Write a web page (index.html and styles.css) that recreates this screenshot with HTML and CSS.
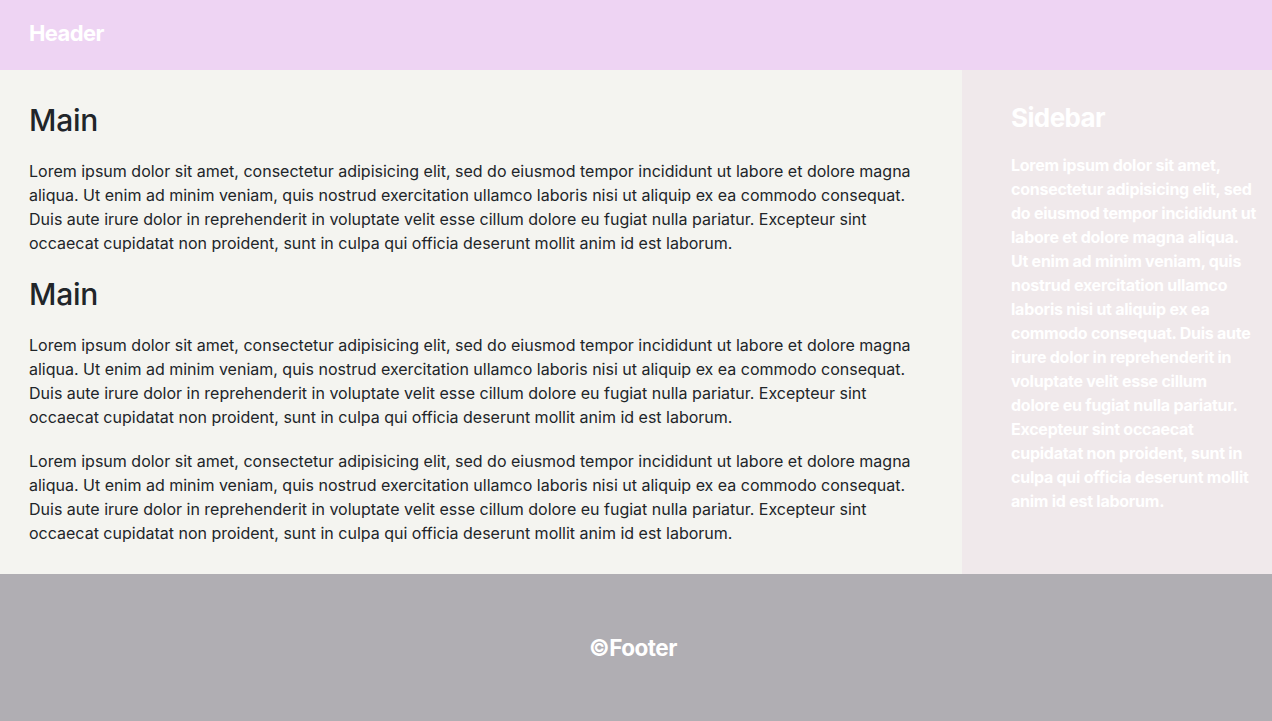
FILE: index.html
```html
<!DOCTYPE html>
<html lang="en">
<head>
<meta charset="utf-8">
<title>Layout</title>
<link rel="stylesheet" href="styles.css">
</head>
<body>
<div class="page">
  <header class="header"><span class="header-title">Header</span></header>
  <main class="main">
    <h1 class="main-title">Main</h1>
    <p class="text">Lorem ipsum dolor sit amet, consectetur adipisicing elit, sed do eiusmod tempor incididunt ut labore et dolore magna aliqua. Ut enim ad minim veniam, quis nostrud exercitation ullamco laboris nisi ut aliquip ex ea commodo consequat. Duis aute irure dolor in reprehenderit in voluptate velit esse cillum dolore eu fugiat nulla pariatur. Excepteur sint occaecat cupidatat non proident, sunt in culpa qui officia deserunt mollit anim id est laborum.</p>
    <h1 class="main-title">Main</h1>
    <p class="text">Lorem ipsum dolor sit amet, consectetur adipisicing elit, sed do eiusmod tempor incididunt ut labore et dolore magna aliqua. Ut enim ad minim veniam, quis nostrud exercitation ullamco laboris nisi ut aliquip ex ea commodo consequat. Duis aute irure dolor in reprehenderit in voluptate velit esse cillum dolore eu fugiat nulla pariatur. Excepteur sint occaecat cupidatat non proident, sunt in culpa qui officia deserunt mollit anim id est laborum.</p>
    <p class="text">Lorem ipsum dolor sit amet, consectetur adipisicing elit, sed do eiusmod tempor incididunt ut labore et dolore magna aliqua. Ut enim ad minim veniam, quis nostrud exercitation ullamco laboris nisi ut aliquip ex ea commodo consequat. Duis aute irure dolor in reprehenderit in voluptate velit esse cillum dolore eu fugiat nulla pariatur. Excepteur sint occaecat cupidatat non proident, sunt in culpa qui officia deserunt mollit anim id est laborum.</p>
  </main>
  <aside class="sidebar">
    <h2 class="sidebar-title">Sidebar</h2>
    <p class="sidebar-text">Lorem ipsum dolor sit amet, consectetur adipisicing elit, sed do eiusmod tempor incididunt ut labore et dolore magna aliqua. Ut enim ad minim veniam, quis nostrud exercitation ullamco laboris nisi ut aliquip ex ea commodo consequat. Duis aute irure dolor in reprehenderit in voluptate velit esse cillum dolore eu fugiat nulla pariatur. Excepteur sint occaecat cupidatat non proident, sunt in culpa qui officia deserunt mollit anim id est laborum.</p>
  </aside>
  <footer class="footer"><span class="footer-text">©Footer</span></footer>
</div>
</body>
</html>
```
FILE: styles.css
```css
* { box-sizing: border-box; }
html, body { margin: 0; padding: 0; }
body {
  font-family: Inter, "Noto Sans", "Liberation Sans", sans-serif;
  font-size: 16px;
  line-height: 1.5;
  color: #212529;
  background: #f4f4f0;
}
.page {
  display: grid;
  grid-template-columns: 1fr 310px;
  grid-template-rows: 70px auto 147px;
  min-height: 721px;
}
.header {
  grid-column: 1 / 3;
  background: #eed4f3;
  display: flex;
  align-items: center;
  padding: 0 29px 4px;
}
.header-title {
  color: #fff;
  font-weight: 700;
  font-size: 22px;
  letter-spacing: -0.6px;
}
.main {
  background: #f4f4f0;
  padding: 31px 29px 9px 29px;
}
.main-title {
  margin: 0 0 20px;
  font-size: 30px;
  font-weight: 500;
  line-height: 38px;
  letter-spacing: -0.2px;
}
.text {
  margin: 0 0 20px;
}
.sidebar {
  background: #f0e9eb;
  padding: 30px 14px 30px 49px;
  color: #ffffff;
}
.sidebar-title {
  margin: 0 0 17px;
  font-size: 26px;
  font-weight: 700;
  line-height: 36px;
  letter-spacing: -0.6px;
}
.sidebar-text {
  margin: 0;
  font-weight: 700;
  letter-spacing: -0.25px;
}
.footer {
  grid-column: 1 / 3;
  background: #b0aeb3;
  display: flex;
  align-items: center;
  justify-content: center;
  padding-right: 6px;
}
.footer-text {
  color: #fff;
  font-weight: 700;
  font-size: 22.5px;
  letter-spacing: -0.5px;
}
```
